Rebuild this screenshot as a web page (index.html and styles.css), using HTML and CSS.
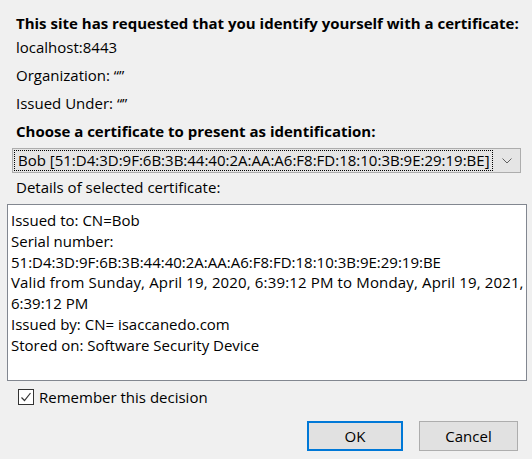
FILE: index.html
```html
<!DOCTYPE html>
<html>
<head>
<meta charset="utf-8">
<link rel="stylesheet" href="styles.css">
</head>
<body>
<div class="dialog">
  <div class="line title bold">This site has requested that you identify yourself with a certificate:</div>
  <div class="line host">localhost:8443</div>
  <div class="line">Organization: “”</div>
  <div class="line">Issued Under: “”</div>
  <div class="line bold">Choose a certificate to present as identification:</div>
  <div class="select">
    <div class="select-value"><span class="focus">Bob [51:D4:3D:9F:6B:3B:44:40:2A:AA:A6:F8:FD:18:10:3B:9E:29:19:BE]</span></div>
    <div class="select-arrow">
      <svg width="10" height="6" viewBox="0 0 10 6"><path d="M0.5 0.5 L5 5 L9.5 0.5" fill="none" stroke="#606060" stroke-width="1"/></svg>
    </div>
  </div>
  <div class="label">Details of selected certificate:</div>
  <div class="details">
    <div>Issued to: CN=Bob</div>
    <div>Serial number:</div>
    <div>51:D4:3D:9F:6B:3B:44:40:2A:AA:A6:F8:FD:18:10:3B:9E:29:19:BE</div>
    <div class="wide">Valid from Sunday, April 19, 2020, 6:39:12 PM to Monday, April 19, 2021,</div>
    <div>6:39:12 PM</div>
    <div>Issued by: CN= isaccanedo.com</div>
    <div>Stored on: Software Security Device</div>
  </div>
  <label class="remember">
    <span class="checkbox">
      <svg width="14" height="14" viewBox="0 0 14 14"><path d="M2.5 7.5 L5.5 10.5 L11.5 3" fill="none" stroke="#333" stroke-width="1.2"/></svg>
    </span>
    <span>Remember this decision</span>
  </label>
  <div class="buttons">
    <div class="btn btn-default">OK</div>
    <div class="btn">Cancel</div>
  </div>
</div>
</body>
</html>
```

FILE: styles.css
```css
html, body {
  margin: 0;
  padding: 0;
  background: #f0f0f0;
}
body {
  font-family: "Open Sans", "Noto Sans", sans-serif;
  font-size: 15px;
  color: #000;
  width: 532px;
  height: 459px;
  overflow: hidden;
}
.dialog {
  padding: 12px 6px 0 7px;
  display: flex;
  flex-direction: column;
}
.line {
  height: 28px;
  line-height: 28px;
  padding-left: 9px;
  white-space: nowrap;
}
.title {
  height: 22px;
  line-height: 22px;
}
.host {
  height: 27px;
  line-height: 27px;
}
.bold {
  font-weight: 700;
}
.select {
  margin: 3px 0 0 5px;
  width: 509px;
  height: 25px;
  box-sizing: border-box;
  border: 1px solid #adadad;
  background: #e5e5e5;
  display: flex;
  align-items: stretch;
}
.select-value {
  flex: 1;
  padding: 1px 0 1px 1px;
  display: flex;
}
.focus {
  flex: 1;
  border: 1px dotted #000;
  line-height: 19px;
  padding-left: 3px;
  white-space: nowrap;
}
.select-arrow {
  width: 27px;
  display: flex;
  align-items: center;
  justify-content: center;
}
.label {
  height: 28px;
  line-height: 28px;
  padding: 0 0 3px 9px;
}
.details {
  width: 520px;
  height: 177px;
  box-sizing: border-box;
  border: 1px solid #828790;
  background: #fff;
  padding: 5px 3px 0 3px;
  line-height: 20.8px;
  white-space: nowrap;
}
.wide {
  letter-spacing: 0.15px;
}
.remember {
  display: flex;
  align-items: center;
  gap: 5px;
  margin: 6px 0 0 11px;
  height: 20px;
}
.checkbox {
  width: 14px;
  height: 14px;
  border: 1px solid #333;
  background: #fff;
  display: flex;
}
.buttons {
  display: flex;
  justify-content: flex-end;
  gap: 16px;
  margin-top: 14px;
  padding-right: 8px;
}
.btn {
  height: 30px;
  box-sizing: border-box;
  border: 1px solid #adadad;
  background: #e1e1e1;
  width: 99px;
  display: flex;
  align-items: center;
  justify-content: center;
}
.btn-default {
  width: 96px;
  border: 2px solid #0078d7;
}
```
